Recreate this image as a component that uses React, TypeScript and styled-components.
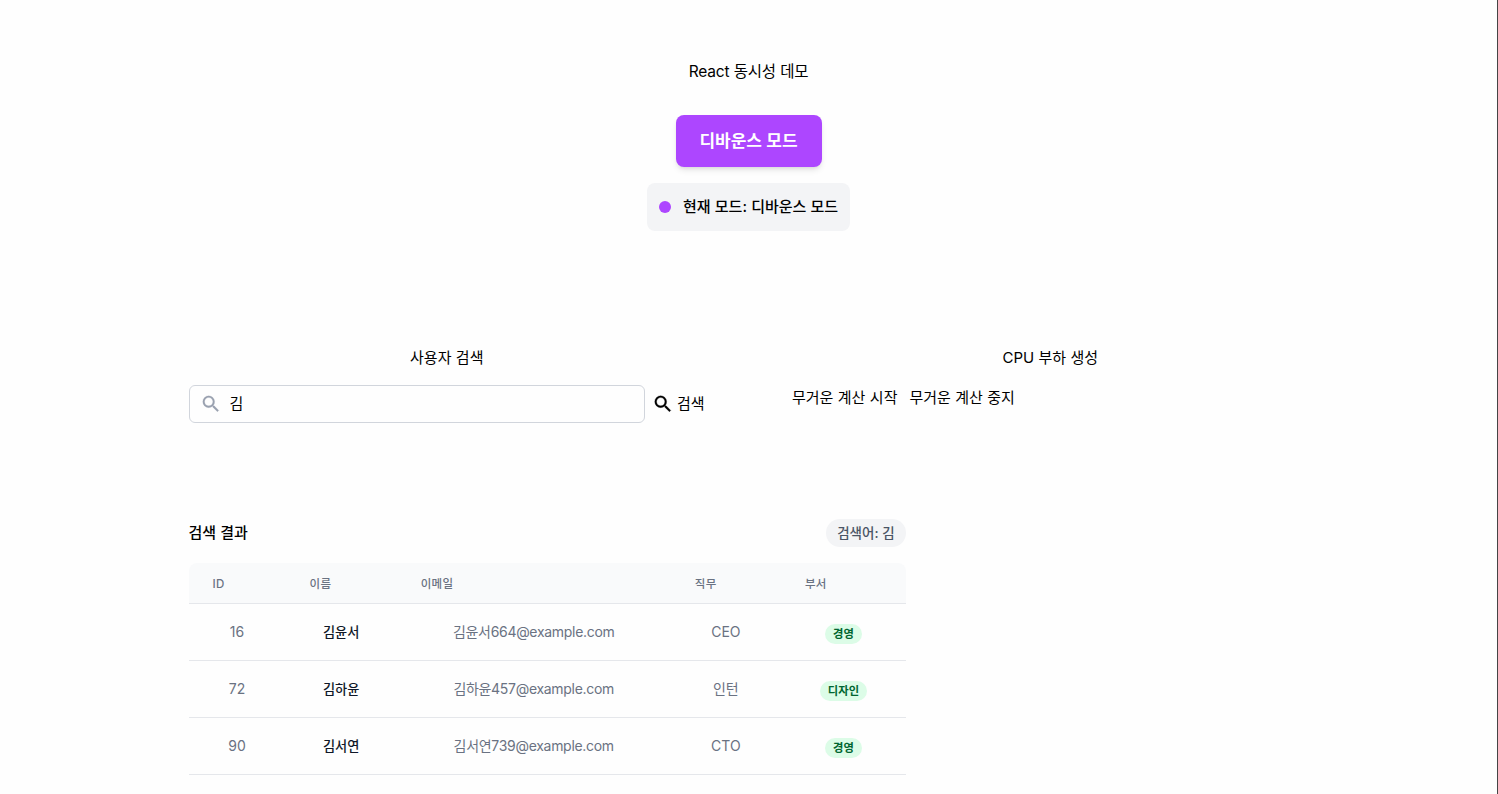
import React, { useState } from "react";
import styled, { createGlobalStyle } from "styled-components";

type User = {
  id: number;
  name: string;
  email: string;
  job: string;
  department: string;
};

const users: User[] = [
  { id: 16, name: "김윤서", email: "김윤서664@example.com", job: "CEO", department: "경영" },
  { id: 72, name: "김하윤", email: "김하윤457@example.com", job: "인턴", department: "디자인" },
  { id: 90, name: "김서연", email: "김서연739@example.com", job: "CTO", department: "경영" }
];

const GlobalStyle = createGlobalStyle`
  * {
    box-sizing: border-box;
  }

  body {
    margin: 0;
    background: #fefefe;
    color: #000;
    font-family: Inter, "Noto Sans CJK KR", sans-serif;
    font-size: 15px;
    line-height: 24px;
    word-spacing: 0.2px;
    overflow: hidden;
  }

  button,
  input {
    padding: 0;
    border: 0;
    background: none;
    color: inherit;
    font: inherit;
    word-spacing: inherit;
  }
`;

const Page = styled.main`
  height: 794px;
  padding: 60px 188.5px 0;
  border-right: 1px solid #454545;
  overflow: hidden;
`;

const Header = styled.header`
  display: flex;
  flex-direction: column;
  align-items: center;
  height: 286px;
`;

const Title = styled.h1`
  margin: 0;
  font-size: 15.5px;
  font-weight: 400;
  letter-spacing: -0.2px;
`;

const ModeButton = styled.button`
  width: 146px;
  height: 52px;
  margin-top: 31px;
  border-radius: 8px;
  background: #ad46ff;
  box-shadow: 0 4px 6px -1px rgba(0, 0, 0, 0.1), 0 2px 4px -2px rgba(0, 0, 0, 0.1);
  color: #fff;
  font-size: 17px;
  font-weight: 700;
`;

const ModeStatus = styled.div`
  display: flex;
  align-items: center;
  gap: 12px;
  width: 203px;
  height: 48px;
  margin-top: 16px;
  padding: 0 12px;
  border-radius: 8px;
  background: #f3f4f6;
  font-weight: 500;
  white-space: nowrap;
`;

const Dot = styled.span`
  flex: none;
  width: 12px;
  height: 12px;
  border-radius: 50%;
  background: #ad46ff;
`;

const Panels = styled.div`
  display: grid;
  grid-template-columns: repeat(2, 1fr);
  gap: 87px;
  height: 173px;
`;

const PanelTitle = styled.h2<{ $spacing?: number }>`
  margin: 0 0 15px;
  font-size: 15px;
  font-weight: 400;
  letter-spacing: ${props => props.$spacing ?? 0}px;
  text-align: center;
`;

const SearchForm = styled.div`
  display: flex;
  align-items: center;
  gap: 7.5px;
`;

const SearchField = styled.label`
  display: flex;
  align-items: center;
  gap: 8px;
  width: 456px;
  height: 38px;
  padding: 0 10px;
  border: 1px solid #d1d5dc;
  border-radius: 6px;

  svg {
    color: #99a1af;
  }

  input {
    flex: 1;
    outline: none;
  }
`;

const SearchButton = styled.button`
  display: flex;
  align-items: center;
  gap: 3px;
  white-space: nowrap;
`;

const LoadActions = styled.div`
  display: flex;
  gap: 12px;
  padding-top: 1px;
  letter-spacing: -0.05px;
`;

const Results = styled.section`
  width: 717.5px;
`;

const ResultsHeader = styled.div`
  display: flex;
  align-items: center;
  justify-content: space-between;
  height: 28px;
  margin-bottom: 16px;
`;

const ResultsTitle = styled.h2`
  margin: 0;
  font-size: 15px;
  font-weight: 500;
`;

const Keyword = styled.span`
  width: 80px;
  border-radius: 14px;
  background: #f3f4f6;
  color: #4a5565;
  font-size: 13.5px;
  font-weight: 500;
  line-height: 28px;
  text-align: center;
`;

const Table = styled.table`
  width: 100%;
  border-spacing: 0;
  table-layout: fixed;
`;

const HeadCell = styled.th<{ $width: number }>`
  width: ${props => props.$width}px;
  height: 41px;
  padding: 1px 24px 0;
  border-bottom: 1px solid #e5e7eb;
  background: #f9fafb;
  color: #6a7282;
  font-size: 11.5px;
  font-weight: 500;
  line-height: 16px;
  letter-spacing: 0.4px;
  text-align: left;

  &:first-child {
    border-top-left-radius: 8px;
  }

  &:last-child {
    border-top-right-radius: 8px;
  }
`;

const Cell = styled.td<{ $strong?: boolean }>`
  height: 57px;
  padding: 0;
  border-bottom: 1px solid #e5e7eb;
  color: ${props => (props.$strong ? "#101828" : "#6a7282")};
  font-size: ${props => (props.$strong ? 13.2 : 14)}px;
  font-weight: ${props => (props.$strong ? 500 : 400)};
  line-height: 20px;
  text-align: center;
`;

const EmailCell = styled(Cell)`
  letter-spacing: -0.3px;
`;

const Badge = styled.span`
  display: inline-flex;
  margin-top: 4px;
  padding: 2px 8px;
  border-radius: 10px;
  background: #dcfce7;
  color: #016630;
  font-size: 11.3px;
  font-weight: 600;
  line-height: 16px;
`;

const SearchIcon: React.FC<{ bold?: boolean }> = ({ bold }) => (
  <svg
    width="22"
    height="22"
    viewBox="0 0 24 24"
    fill="currentColor"
    stroke="currentColor"
    strokeWidth={bold ? 0.3 : 0.2}
  >
    <path d="M15.5 14h-.79l-.28-.27A6.471 6.471 0 0 0 16 9.5 6.5 6.5 0 1 0 9.5 16c1.61 0 3.09-.59 4.23-1.57l.27.28v.79l5 4.99L20.49 19l-4.99-5zm-6 0C7.01 14 5 11.99 5 9.5S7.01 5 9.5 5 14 7.01 14 9.5 11.99 14 9.5 14z" />
  </svg>
);

const App: React.FC = () => {
  const [keyword, setKeyword] = useState("김");

  return (
    <>
      <GlobalStyle />
      <Page>
        <Header>
          <Title>React 동시성 데모</Title>
          <ModeButton>디바운스 모드</ModeButton>
          <ModeStatus>
            <Dot />
            현재 모드: 디바운스 모드
          </ModeStatus>
        </Header>
        <Panels>
          <section>
            <PanelTitle>사용자 검색</PanelTitle>
            <SearchForm>
              <SearchField>
                <SearchIcon />
                <input value={keyword} onChange={e => setKeyword(e.target.value)} />
              </SearchField>
              <SearchButton>
                <SearchIcon bold />
                검색
              </SearchButton>
            </SearchForm>
          </section>
          <section>
            <PanelTitle $spacing={-0.05}>CPU 부하 생성</PanelTitle>
            <LoadActions>
              <button>무거운 계산 시작</button>
              <button>무거운 계산 중지</button>
            </LoadActions>
          </section>
        </Panels>
        <Results>
          <ResultsHeader>
            <ResultsTitle>검색 결과</ResultsTitle>
            <Keyword>검색어: {keyword}</Keyword>
          </ResultsHeader>
          <Table>
            <thead>
              <tr>
                <HeadCell $width={97}>ID</HeadCell>
                <HeadCell $width={111}>이름</HeadCell>
                <HeadCell $width={274}>이메일</HeadCell>
                <HeadCell $width={110}>직무</HeadCell>
                <HeadCell $width={125}>부서</HeadCell>
              </tr>
            </thead>
            <tbody>
              {users.map(user => (
                <tr key={user.id}>
                  <Cell>{user.id}</Cell>
                  <Cell $strong>{user.name}</Cell>
                  <EmailCell>{user.email}</EmailCell>
                  <Cell>{user.job}</Cell>
                  <Cell>
                    <Badge>{user.department}</Badge>
                  </Cell>
                </tr>
              ))}
            </tbody>
          </Table>
        </Results>
      </Page>
    </>
  );
};

export default App;
